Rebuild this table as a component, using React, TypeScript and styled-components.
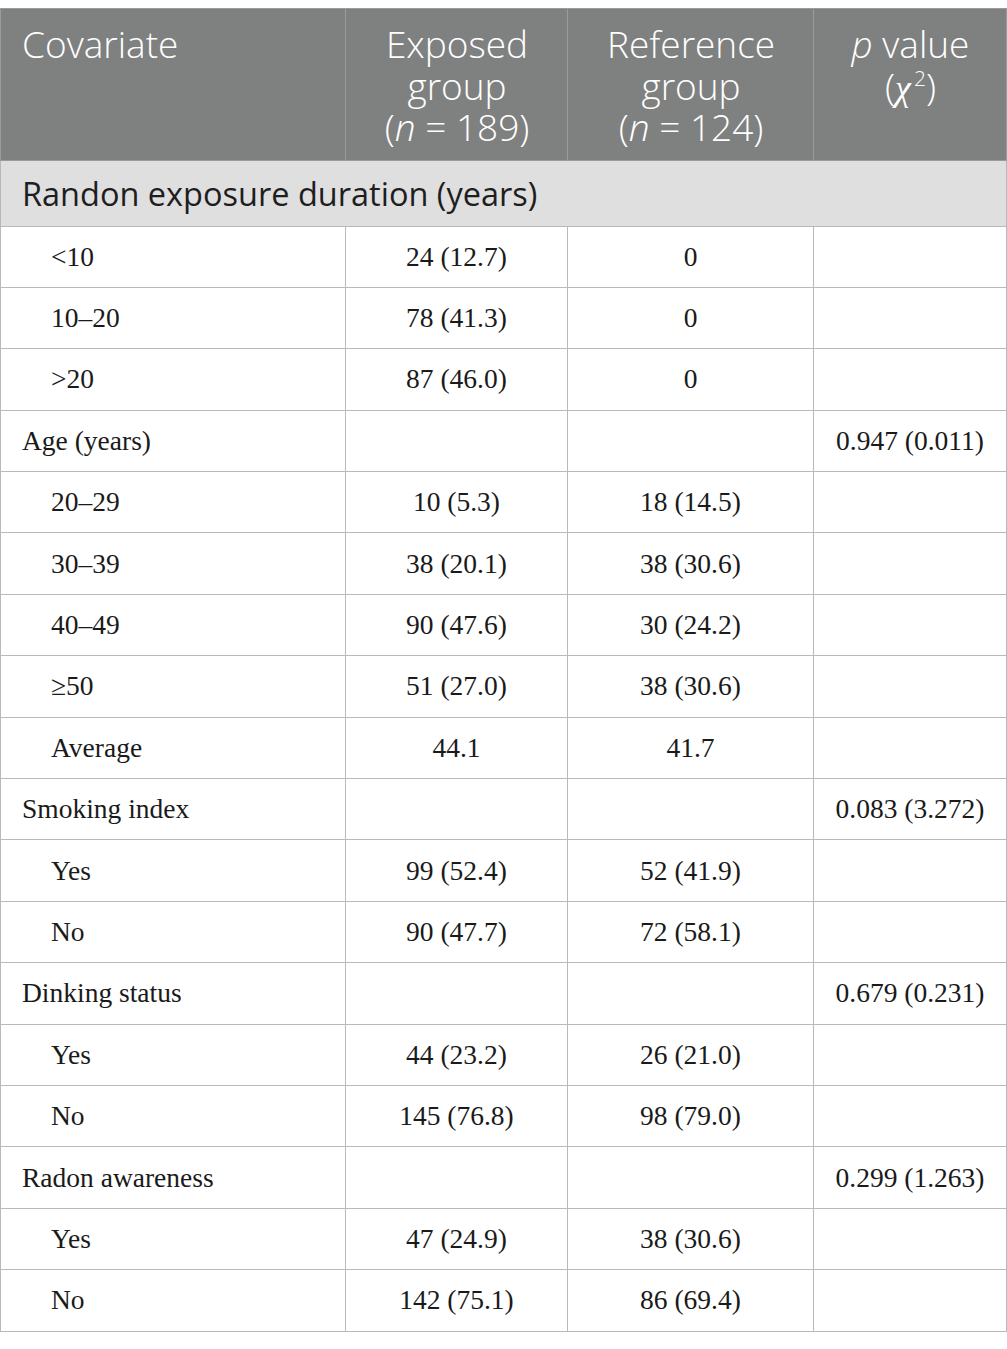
import styled, { createGlobalStyle } from 'styled-components';

interface rowType {
  label: string;
  exposed?: string;
  reference?: string;
  p?: string;
  sub?: boolean;
}

const Rows: rowType[] = [
  { label: '<10', exposed: '24 (12.7)', reference: '0', sub: true },
  { label: '10–20', exposed: '78 (41.3)', reference: '0', sub: true },
  { label: '>20', exposed: '87 (46.0)', reference: '0', sub: true },
  { label: 'Age (years)', p: '0.947 (0.011)' },
  { label: '20–29', exposed: '10 (5.3)', reference: '18 (14.5)', sub: true },
  { label: '30–39', exposed: '38 (20.1)', reference: '38 (30.6)', sub: true },
  { label: '40–49', exposed: '90 (47.6)', reference: '30 (24.2)', sub: true },
  { label: '≥50', exposed: '51 (27.0)', reference: '38 (30.6)', sub: true },
  { label: 'Average', exposed: '44.1', reference: '41.7', sub: true },
  { label: 'Smoking index', p: '0.083 (3.272)' },
  { label: 'Yes', exposed: '99 (52.4)', reference: '52 (41.9)', sub: true },
  { label: 'No', exposed: '90 (47.7)', reference: '72 (58.1)', sub: true },
  { label: 'Dinking status', p: '0.679 (0.231)' },
  { label: 'Yes', exposed: '44 (23.2)', reference: '26 (21.0)', sub: true },
  { label: 'No', exposed: '145 (76.8)', reference: '98 (79.0)', sub: true },
  { label: 'Radon awareness', p: '0.299 (1.263)' },
  { label: 'Yes', exposed: '47 (24.9)', reference: '38 (30.6)', sub: true },
  { label: 'No', exposed: '142 (75.1)', reference: '86 (69.4)', sub: true },
];

function App() {
  return (
    <>
      <GlobalStyle />
      <Page>
        <Table>
          <colgroup>
            <col style={{ width: 345 }} />
            <col style={{ width: 222 }} />
            <col style={{ width: 246 }} />
            <col style={{ width: 193 }} />
          </colgroup>
          <thead>
            <tr>
              <HeadCell align='left'>
                <HeadLine>Covariate</HeadLine>
              </HeadCell>
              <HeadCell>
                <HeadLine>Exposed</HeadLine>
                <HeadLine>group</HeadLine>
                <HeadLine>
                  (<i>n</i> = 189)
                </HeadLine>
              </HeadCell>
              <HeadCell>
                <HeadLine>Reference</HeadLine>
                <HeadLine>group</HeadLine>
                <HeadLine>
                  (<i>n</i> = 124)
                </HeadLine>
              </HeadCell>
              <HeadCell>
                <HeadLine>
                  <i>p</i> value
                </HeadLine>
                <HeadLine>
                  (<Chi>χ</Chi>
                  <Sup>2</Sup>)
                </HeadLine>
              </HeadCell>
            </tr>
          </thead>
          <tbody>
            <tr>
              <SectionCell colSpan={4}>Randon exposure duration (years)</SectionCell>
            </tr>
            {Rows.map((row, i) => (
              <tr key={i}>
                <LabelCell sub={row.sub}>{row.label}</LabelCell>
                <ValueCell>{row.exposed}</ValueCell>
                <ValueCell>{row.reference}</ValueCell>
                <ValueCell>{row.p}</ValueCell>
              </tr>
            ))}
          </tbody>
        </Table>
      </Page>
    </>
  );
}

export default App;

const GlobalStyle = createGlobalStyle`
  body {
    margin: 0;
    background: #ffffff;
  }
`;

const Page = styled.div`
  padding-top: 8px;
  width: 1007px;
`;

const Table = styled.table`
  width: 1007px;
  table-layout: fixed;
  border-collapse: collapse;
  border: 1px solid #b9b9b9;
`;

const HeadCell = styled.th<{ align?: 'left' | 'center' }>`
  background: #7f8180;
  color: #ffffff;
  font-family: 'Open Sans', sans-serif;
  font-weight: 350;
  font-size: 37px;
  text-align: ${(p) => p.align || 'center'};
  vertical-align: top;
  padding: 14px 20px 12px 21px;
  height: 151px;
  box-sizing: border-box;
  border: 1px solid #9a9b9b;
`;

const HeadLine = styled.div`
  height: 41.5px;
  line-height: 41.5px;
  white-space: nowrap;
`;

const Chi = styled.i`
  font-family: 'Liberation Serif', serif;
  font-size: 36px;
  margin-right: 3px;
`;

const Sup = styled.span`
  font-size: 21px;
  position: relative;
  top: -14px;
`;

const SectionCell = styled.td`
  background: #e0dfe0;
  color: #1e1e1e;
  font-family: 'Open Sans', sans-serif;
  font-size: 32.5px;
  height: 66px;
  padding: 0 21px;
  box-sizing: border-box;
  border: 1px solid #b9b9b9;
`;

const LabelCell = styled.td<{ sub?: boolean }>`
  font-family: 'Liberation Serif', serif;
  font-size: 27.5px;
  color: #1a1a1a;
  height: 61.4px;
  padding: 0 0 0 ${(p) => (p.sub ? '50px' : '21px')};
  box-sizing: border-box;
  border: 1px solid #b9b9b9;
`;

const ValueCell = styled.td`
  font-family: 'Liberation Serif', serif;
  font-size: 27.5px;
  color: #1a1a1a;
  text-align: center;
  height: 61.4px;
  padding: 0;
  box-sizing: border-box;
  border: 1px solid #b9b9b9;
`;
